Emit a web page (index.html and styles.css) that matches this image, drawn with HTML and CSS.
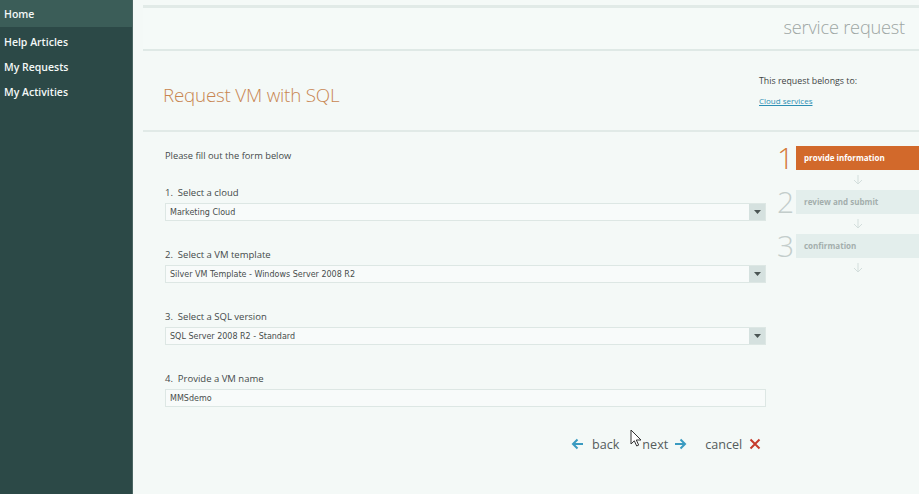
FILE: index.html
```html
<!DOCTYPE html>
<html>
<head>
<meta charset="utf-8">
<link rel="stylesheet" href="styles.css">
</head>
<body>
<div class="app">
  <nav class="sidebar">
    <div class="nav-home">Home</div>
    <ul class="nav-list">
      <li>Help Articles</li>
      <li>My Requests</li>
      <li>My Activities</li>
    </ul>
  </nav>
  <main class="main">
    <header class="topband">
      <span class="page-kind">service request</span>
    </header>
    <section class="titlebar">
      <h1 class="title">Request VM with SQL</h1>
      <div class="belongs">
        <div class="belongs-label">This request belongs to:</div>
        <a class="belongs-link">Cloud services</a>
      </div>
    </section>
    <section class="body">
      <form class="form">
        <p class="intro">Please fill out the form below</p>
        <div class="field">
          <label class="field-label">1.&nbsp; Select a cloud</label>
          <div class="select"><span class="select-value">Marketing Cloud</span><span class="select-btn"><svg width="7" height="4" viewBox="0 0 7 4"><path d="M0 0h7L3.5 4z" fill="#4b5554"/></svg></span></div>
        </div>
        <div class="field">
          <label class="field-label">2.&nbsp; Select a VM template</label>
          <div class="select"><span class="select-value">Silver VM Template - Windows Server 2008 R2</span><span class="select-btn"><svg width="7" height="4" viewBox="0 0 7 4"><path d="M0 0h7L3.5 4z" fill="#4b5554"/></svg></span></div>
        </div>
        <div class="field">
          <label class="field-label">3.&nbsp; Select a SQL version</label>
          <div class="select"><span class="select-value">SQL Server 2008 R2 - Standard</span><span class="select-btn"><svg width="7" height="4" viewBox="0 0 7 4"><path d="M0 0h7L3.5 4z" fill="#4b5554"/></svg></span></div>
        </div>
        <div class="field">
          <label class="field-label">4.&nbsp; Provide a VM name</label>
          <div class="input"><span class="select-value">MMSdemo</span></div>
        </div>
        <div class="actions">
          <span class="action"><svg class="arr" width="13" height="12" viewBox="0 0 13 12"><path d="M12 6H2M6.5 1.5L2 6l4.5 4.5" fill="none" stroke="#3a9bc1" stroke-width="2"/></svg>back</span>
          <span class="action next">next<svg class="arr" width="13" height="12" viewBox="0 0 13 12"><path d="M1 6h10M6.5 1.5L11 6l-4.5 4.5" fill="none" stroke="#3a9bc1" stroke-width="2"/></svg></span>
          <span class="action cancel">cancel<svg class="arr" width="12" height="12" viewBox="0 0 12 12"><path d="M1.5 1.5l9 9M10.5 1.5l-9 9" fill="none" stroke="#c63b2c" stroke-width="2"/></svg></span>
          <svg class="cursor" width="12" height="18" viewBox="0 0 12 18"><path d="M1 1v14l3.3-3.2 2.4 5.2 2-0.9-2.4-5.1H11z" fill="#fff" stroke="#333" stroke-width="1"/></svg>
        </div>
      </form>
      <ol class="steps">
        <li class="step active"><span class="step-num">1</span><span class="step-bar">provide information</span></li>
        <li class="step-arrow"><svg width="10" height="10" viewBox="0 0 10 10"><path d="M5 0v9M1 5l4 4 4-4" fill="none" stroke="#d3dedc" stroke-width="1"/></svg></li>
        <li class="step"><span class="step-num">2</span><span class="step-bar">review and submit</span></li>
        <li class="step-arrow"><svg width="10" height="10" viewBox="0 0 10 10"><path d="M5 0v9M1 5l4 4 4-4" fill="none" stroke="#d3dedc" stroke-width="1"/></svg></li>
        <li class="step"><span class="step-num">3</span><span class="step-bar">confirmation</span></li>
        <li class="step-arrow"><svg width="10" height="10" viewBox="0 0 10 10"><path d="M5 0v9M1 5l4 4 4-4" fill="none" stroke="#d3dedc" stroke-width="1"/></svg></li>
      </ol>
    </section>
  </main>
</div>
</body>
</html>
```
FILE: styles.css
```css
* { box-sizing: border-box; }
html, body { margin: 0; padding: 0; height: 100%; }
body {
  font-family: "Open Sans", "Noto Sans", sans-serif;
  background: #f4f9f7;
  overflow: hidden;
}
.app { display: flex; height: 494px; width: 919px; }
.sidebar {
  width: 133px;
  flex: none;
  background: #2c4947;
  border-right: 1px solid #4b6663;
  color: #f4f8f7;
  font-size: 10.5px;
  font-weight: 600;
}
.nav-home {
  height: 27px;
  line-height: 28px;
  padding-left: 4px;
  background: #3b5d58;
}
.nav-list { list-style: none; margin: 0; padding: 3px 0 0 4px; }
.nav-list li { height: 25px; line-height: 25px; }

.main { flex: 1; display: flex; flex-direction: column; padding-left: 10px; }
.topband {
  margin-top: 5px;
  height: 46px;
  border-top: 3px solid #e1eae7;
  border-bottom: 2px solid #dfe9e6;
  background: #f5faf8;
  display: flex;
  justify-content: flex-end;
  align-items: center;
  padding-right: 14px;
}
.page-kind {
  font-size: 18.2px;
  font-weight: 300;
  color: #9ea6a4;
  letter-spacing: -0.2px;
  margin-top: -3px;
}
.titlebar {
  height: 81px;
  border-bottom: 2px solid #e1eae7;
  display: flex;
  align-items: flex-start;
  justify-content: space-between;
  padding-left: 20px;
}
.title {
  margin: 31px 0 0;
  font-size: 18.8px;
  font-weight: 300;
  color: #c88550;
  letter-spacing: -0.2px;
}
.belongs { width: 160px; padding-top: 24px; }
.belongs-label { font-size: 8.8px; color: #3f4444; line-height: 12px; }
.belongs-link {
  display: inline-block;
  margin-top: 8px;
  font-size: 8px;
  color: #2d8fb4;
  text-decoration: underline;
  line-height: 12px;
}

.body { display: flex; padding-left: 22px; }
.form { width: 601px; padding-top: 17px; }
.intro {
  margin: 0 0 23px;
  font-size: 9.3px;
  line-height: 14px;
  color: #454a4a;
}
.field { margin-bottom: 27px; }
.field-label {
  display: block;
  font-size: 9.5px;
  line-height: 14px;
  color: #444a4a;
  margin-bottom: 3px;
}
.select, .input {
  display: flex;
  height: 18px;
  border: 1px solid #dde7e4;
  background: #f8fbfa;
  align-items: center;
}
.select-value {
  flex: 1;
  padding-left: 4px;
  font-family: "DejaVu Sans", sans-serif;
  font-size: 8px;
  color: #474d4c;
}
.select-btn {
  width: 16px;
  height: 100%;
  background: #d5e1df;
  display: flex;
  align-items: center;
  justify-content: center;
}
.actions {
  position: relative;
  display: flex;
  align-items: center;
  margin-top: 2px;
  padding-left: 406px;
  height: 20px;
  font-size: 12.6px;
  color: #555c5c;
  justify-content: flex-start;
}
.action { display: flex; align-items: center; }
.action .arr { margin-right: 8px; }
.action.next { margin-left: 23px; }
.action.next .arr { margin: 0 0 0 6px; }
.action.cancel { margin-left: 18px; }
.action.cancel .arr { margin: 0 0 0 7px; }
.cursor { position: absolute; left: 465px; top: -5px; }

.steps { list-style: none; margin: 0; padding: 14px 0 0 11px; flex: 1; }
.step { display: flex; align-items: center; height: 24px; }
.step-num {
  width: 19px;
  font-size: 30px;
  font-weight: 300;
  color: #c3cdcb;
  line-height: 24px;
}
.step-bar {
  flex: 1;
  height: 24px;
  line-height: 24px;
  padding-left: 8px;
  background: #e3eeec;
  color: #a3aeac;
  font-size: 8px;
  font-weight: 700;
}
.step.active .step-num { color: #d47a3a; }
.step.active .step-bar { background: #d2692b; color: #fff; }
.step-arrow {
  height: 20px;
  padding-left: 19px;
  display: flex;
  justify-content: center;
  align-items: center;
}
```
